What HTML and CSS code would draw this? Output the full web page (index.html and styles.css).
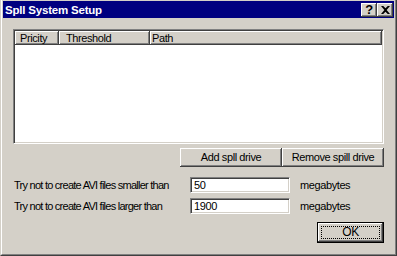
FILE: index.html
```html
<!DOCTYPE html>
<html>
<head>
  <meta charset="utf-8">
  <title>Spill System Setup</title>
  <link rel="stylesheet" href="styles.css">
</head>
<body>
<div class="window">
  <div class="frame">
    <div class="titlebar">
      <div class="title">Spll System Setup</div>
      <div class="caption-btn caption-help">?</div>
      <div class="caption-btn caption-close">
        <svg width="8" height="7" viewBox="0 0 8 7"><path d="M0 0h2l2 2 2-2h2L5 3.5 8 7H6L4 5 2 7H0l3-3.5z" fill="#000"/></svg>
      </div>
    </div>

    <div class="content">
      <div class="listview">
        <div class="list-header">
          <div class="col col-priority">Pricity</div>
          <div class="col col-threshold">Threshold</div>
          <div class="col col-path">Path</div>
        </div>
      </div>

      <div class="drive-buttons">
        <div class="btn btn-drive">Add spll drive</div>
        <div class="btn btn-drive">Remove spill drive</div>
      </div>

      <div class="field-row">
        <div class="field-label">Try not to create AVI files smaller than</div>
        <div class="field-input">50</div>
        <div class="field-unit">megabytes</div>
      </div>
      <div class="field-row">
        <div class="field-label">Try not to create AVI files larger than</div>
        <div class="field-input">1900</div>
        <div class="field-unit">megabytes</div>
      </div>

      <div class="footer">
        <div class="btn btn-ok"><span class="focus">OK</span></div>
      </div>
    </div>
  </div>
</div>
</body>
</html>
```

FILE: styles.css
```css
body {
  margin: 0;
  background: #d4d0c8;
  font-family: 'Liberation Sans', Arial, sans-serif;
  font-size: 11px;
  letter-spacing: -0.4px;
  color: #000;
  overflow: hidden;
  white-space: nowrap;
}

.window {
  width: 397px;
  height: 256px;
  box-sizing: border-box;
  border: 1px solid;
  border-top: 0;
  border-color: #d4d0c8 #404040 #404040 #d4d0c8;
}

.frame {
  height: 100%;
  box-sizing: border-box;
  border: 1px solid;
  border-top: 0;
  border-color: #fff #808080 #808080 #fff;
  padding: 1px 1px 0 1px;
  display: flex;
  flex-direction: column;
}

/* title bar */
.titlebar {
  height: 17px;
  background: #000080;
  display: flex;
  align-items: center;
  padding: 0 1px 0 2px;
}

.title {
  flex: 1;
  color: #fff;
  font-weight: bold;
  font-size: 11.5px;
  letter-spacing: -0.2px;
}

.caption-btn {
  width: 16px;
  height: 14px;
  background: #d4d0c8;
  box-shadow: inset -1px -1px #404040, inset 1px 1px #fff, inset -2px -2px #808080;
  display: flex;
  justify-content: center;
  align-items: center;
  font-weight: bold;
  font-size: 13px;
  line-height: 14px;
}

.caption-close svg {
  width: 9px;
  height: 8px;
}

/* list */
.content {
  flex: 1;
  padding: 11px 10px 0 10px;
  display: flex;
  flex-direction: column;
}

.listview {
  height: 115px;
  box-sizing: border-box;
  background: #fff;
  border: 1px solid;
  border-color: #808080 #fff #fff #808080;
  box-shadow: inset 1px 1px #404040, inset -1px -1px #d4d0c8;
  padding: 1px;
}

.list-header {
  display: flex;
  height: 14px;
}

.col {
  box-sizing: border-box;
  background: #d4d0c8;
  box-shadow: inset -1px -1px #404040, inset 1px 1px #fff, inset -2px -2px #808080;
  line-height: 14px;
  padding-left: 5px;
}

.col-priority {
  width: 44px;
}

.col-threshold {
  width: 91px;
  padding-left: 7px;
}

.col-path {
  flex: 1;
  padding-left: 2px;
}

/* buttons */
.drive-buttons {
  display: flex;
  justify-content: flex-end;
  margin-top: 4px;
}

.btn {
  box-sizing: border-box;
  background: #d4d0c8;
  box-shadow: inset -1px -1px #404040, inset 1px 1px #fff, inset -2px -2px #808080;
  text-align: center;
}

.btn-drive {
  width: 102px;
  height: 19px;
  line-height: 19px;
}

/* fields */
.field-row {
  display: flex;
  align-items: center;
  margin-top: 10px;
}

.field-row + .field-row {
  margin-top: 5px;
}

.field-label {
  width: 176px;
  padding-left: 1px;
  letter-spacing: -0.75px;
}

.field-input {
  width: 100px;
  height: 16px;
  box-sizing: border-box;
  background: #fff;
  border: 1px solid;
  border-color: #808080 #fff #fff #808080;
  box-shadow: inset 1px 1px #404040, inset -1px -1px #d4d0c8;
  padding-left: 3px;
  line-height: 14px;
}

.field-unit {
  margin-left: 10px;
}

.footer {
  display: flex;
  justify-content: flex-end;
  margin-top: 8px;
}

.btn-ok {
  width: 67px;
  height: 21px;
  border: 1px solid #000;
  padding: 3px;
  display: flex;
}

.focus {
  flex: 1;
  border: 1px dotted #000;
  line-height: 11px;
  font-size: 12px;
}
```
